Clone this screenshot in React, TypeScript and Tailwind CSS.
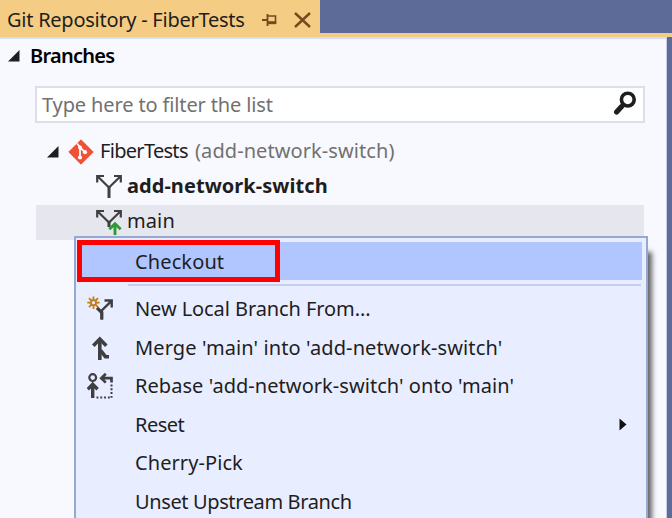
import type { ReactNode } from "react";

const INK = "#3f3f41";

function Label({ children, className = "" }: { children: ReactNode; className?: string }) {
  return <span className={`whitespace-pre leading-[28px] ${className}`}>{children}</span>;
}

function Expander() {
  return (
    <svg width="12" height="12" viewBox="0 0 12 12" className="shrink-0">
      <path d="M11.5 0v11.5H0z" fill="#1e1e1e" />
    </svg>
  );
}

function PinIcon() {
  return (
    <svg width="16" height="14" viewBox="0 0 16 14" fill="none" stroke="#754a1c" className="shrink-0">
      <path d="M0 7h5M5.5 1v12" strokeWidth="1.8" />
      <path d="M5.5 3h8v7.5" strokeWidth="1.6" />
      <path d="M5.5 9.7h8.7" strokeWidth="3" />
    </svg>
  );
}

function CloseIcon() {
  return (
    <svg width="17" height="16" viewBox="0 0 17 16" fill="none" stroke="#754a1c" className="shrink-0">
      <path d="M1 1l15 14M16 1L1 15" strokeWidth="2.4" />
    </svg>
  );
}

function SearchIcon() {
  return (
    <svg width="24" height="25" viewBox="0 0 24 25" fill="none" stroke="#1e1e1e" className="shrink-0">
      <circle cx="14.8" cy="8.6" r="6.4" strokeWidth="3.6" />
      <path d="M10.5 13.5L8.5 15.5" strokeWidth="3.4" />
      <path d="M8.4 15.7L3.6 21" strokeWidth="5.2" strokeLinecap="round" />
    </svg>
  );
}

function GitIcon() {
  return (
    <svg width="26" height="26" viewBox="0 0 26 26" fill="none" className="shrink-0">
      <path d="M13 .8L25.2 13L13 25.2L.8 13z" fill="#f05133" stroke="#f05133" strokeLinejoin="round" />
      <path d="M9 4.5L12 8V19.5M12.2 8.5L17 13.3" stroke="#f8f9ff" strokeWidth="1.8" />
      <circle cx="12" cy="8.6" r="2" fill="#f8f9ff" />
      <circle cx="17" cy="13.2" r="2.1" fill="#f8f9ff" />
      <circle cx="12" cy="18.5" r="2.1" fill="#f8f9ff" />
    </svg>
  );
}

function BranchIcon({ tracked = false }: { tracked?: boolean }) {
  return (
    <svg width="26" height="26" viewBox="0 0 26 26" fill="none" stroke={INK} className="shrink-0">
      <path d="M1.2 8.5V2H8M1.5 2.2L13 13.5M24.8 8.5V2H18M24.5 2.2L13 13.5" strokeWidth="2.2" />
      <path d={tracked ? "M13 12.5V18" : "M13 12.5V24"} strokeWidth="3" />
      {tracked && (
        <path d="M19 26V15M13.3 20.2L19 14.8L24.7 20.2" stroke="#2f9a35" strokeWidth="2.9" />
      )}
    </svg>
  );
}

function NewBranchIcon() {
  return (
    <svg width="26" height="26" viewBox="0 0 26 26" fill="none" className="shrink-0">
      <g stroke="#c27d1a" strokeWidth="1.8">
        <path d="M6.5 .5V4M6.5 9.5V13M.3 6.7H4M9 6.7H12.7M2 2.2L4.8 5M8.2 8.4L11 11.2M11 2.2L8.2 5M4.8 8.4L2 11.2" />
        <circle cx="6.5" cy="6.7" r="2.5" />
      </g>
      <path d="M14.8 23.5V14.5L24 5.3M17.5 4.5H24.7V11.5" stroke={INK} strokeWidth="2.4" />
      <path d="M10 11.8L14.8 16.5V23.5" stroke={INK} strokeWidth="3.2" />
    </svg>
  );
}

function MergeIcon() {
  return (
    <svg width="26" height="26" viewBox="0 0 26 26" fill="none" stroke={INK} className="shrink-0">
      <path d="M12.8 25V4" strokeWidth="3.6" />
      <path d="M6.3 10.8L12.8 4L19.3 10.8" strokeWidth="3.6" />
      <path d="M13.5 15.5L18.5 21.7H22" strokeWidth="3.6" />
    </svg>
  );
}

function RebaseIcon() {
  return (
    <svg width="26" height="26" viewBox="0 0 26 26" fill="none" stroke={INK} className="shrink-0">
      <circle cx="5.7" cy="4.6" r="3.4" strokeWidth="2.2" />
      <path d="M5.7 25V11M.8 16.3L5.7 11.3L10.6 16.3" strokeWidth="3.4" />
      <path d="M24.5 9.5V5.2H15M18.8 .8L14.3 5.2L18.8 9.6" strokeWidth="2.7" />
      <path d="M24.5 11.5V25M9.5 24.5H24" strokeWidth="2" strokeDasharray="1.9 1.9" />
    </svg>
  );
}

type Item = { label: string; track: string; icon?: ReactNode; submenu?: boolean };

const items: Item[] = [
  { label: "New Local Branch From...", track: "tracking-[-0.08px]", icon: <NewBranchIcon /> },
  { label: "Merge 'main' into 'add-network-switch'", track: "tracking-[0.11px]", icon: <MergeIcon /> },
  { label: "Rebase 'add-network-switch' onto 'main'", track: "tracking-[0.05px]", icon: <RebaseIcon /> },
  { label: "Reset", track: "tracking-[-0.5px]", submenu: true },
  { label: "Cherry-Pick", track: "tracking-[0.08px]" },
  { label: "Unset Upstream Branch", track: "tracking-[-0.38px]" },
];

function ContextMenu() {
  return (
    <div className="absolute left-[74px] top-[236px] h-[300px] w-[574px] border-2 border-[#94a9d2] bg-[#e8edff] pt-[4px] shadow-[6px_14px_5px_-2px_rgba(0,0,0,0.6)]">
      <div className="relative ml-[5px] mr-[4px] flex h-[38px] items-center bg-[#b1c5ff] pl-[54px]">
        <Label className="pt-[2px] tracking-[0.12px]">Checkout</Label>
        <div className="absolute left-[-4px] top-[-2px] h-[42px] w-[203px] border-[5px] border-[#ff0000]" />
      </div>
      <div className="ml-[52px] mr-[5px] mt-[4px] h-[2px] bg-[#c4cff0]" />
      <div className="mt-[4px] flex flex-col">
        {items.map((item) => (
          <div key={item.label} className="flex h-[38.5px] shrink-0 items-center pl-[11px] pr-[19px]">
            <div className="mr-[22px] flex w-[26px] justify-center">{item.icon}</div>
            <Label className={item.track}>{item.label}</Label>
            {item.submenu && (
              <svg width="8" height="13" viewBox="0 0 8 13" className="ml-auto">
                <path d="M.5 .5L7.5 6.5L.5 12.5z" fill="#111" />
              </svg>
            )}
          </div>
        ))}
      </div>
    </div>
  );
}

export default function App() {
  return (
    <div className="relative flex h-[518px] w-[672px] flex-col overflow-hidden bg-[#5d6b99] font-['Noto_Sans','Open_Sans',sans-serif] text-[20px] text-[#1e1e1e]">
      <div className="flex h-[33px] shrink-0">
        <div className="flex w-[320px] items-center bg-[#f5cc84] pl-[7px] pt-[6px]">
          <Label className="w-[255px] tracking-[-0.25px]">Git Repository - FiberTests</Label>
          <PinIcon />
          <div className="ml-[16px] flex">
            <CloseIcon />
          </div>
        </div>
      </div>
      <div className="h-[4px] shrink-0 bg-[#f5cc84]" />
      <div className="mr-[5px] flex grow flex-col border-r border-t-2 border-r-[#c9cfe2] border-t-[#d3defa] bg-[#f8f9ff]">
        <div className="mt-[3px] flex h-[28px] items-center pl-[8px]">
          <Expander />
          <Label className="ml-[10px] font-semibold tracking-[-0.75px] text-black">Branches</Label>
        </div>
        <div className="ml-[35px] mt-[16px] flex h-[37px] w-[610px] items-center justify-between border-2 border-[#dcdfe9] bg-white pl-[5px] pr-[6px]">
          <Label className="tracking-[-0.13px] text-[#717171]">Type here to filter the list</Label>
          <div className="flex pb-[2px]">
            <SearchIcon />
          </div>
        </div>
        <div className="ml-[36px] mr-[22px] mt-[12px] flex flex-col">
          <div className="flex h-[35px] items-center pl-[11px]">
            <div className="flex pb-[2px]">
              <Expander />
            </div>
            <div className="ml-[9px] mr-[6px] flex pb-[2px]">
              <GitIcon />
            </div>
            <Label className="w-[95px] pb-[4px] tracking-[-0.7px]">FiberTests</Label>
            <Label className="pb-[4px] tracking-[0.08px] text-[#717171]">(add-network-switch)</Label>
          </div>
          <div className="flex h-[35px] items-center pl-[60px]">
            <div className="flex pb-[2px]">
              <BranchIcon />
            </div>
            <Label className="ml-[5px] pb-[4px] font-bold tracking-[0.05px]">add-network-switch</Label>
          </div>
          <div className="flex h-[35px] items-center bg-[#e6e7ee] pl-[60px]">
            <div className="flex pb-[2px]">
              <BranchIcon tracked />
            </div>
            <Label className="ml-[5px] pb-[4px] tracking-[0.1px]">main</Label>
          </div>
        </div>
      </div>
      <ContextMenu />
    </div>
  );
}
